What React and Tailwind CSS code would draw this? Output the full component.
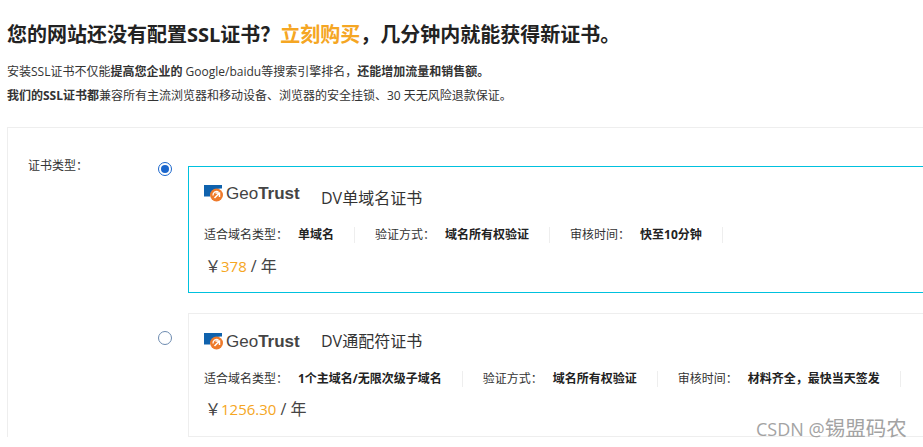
const FONT = 'font-["Open_Sans","Noto_Sans_CJK_SC",sans-serif]';

function GeoTrustLogo() {
  return (
    <div className="flex h-[26px] w-[117px] items-center">
      <svg width="20" height="18" viewBox="0 0 20 18" className="shrink-0">
        <path d="M0 1H18V4.5C12 4 7 7 6 12.5H0Z" fill="#0f62ad" />
        <circle cx="12.5" cy="11" r="6.5" fill="#ee7a2b" />
        <path d="M9 11.5A3.8 3.8 0 0 1 14.5 7.8" fill="none" stroke="#ffffff" strokeWidth="1.3" />
        <path d="M10.5 14L15 9.5M11.5 9H15.5V13" fill="none" stroke="#ffffff" strokeWidth="1.5" />
      </svg>
      <span className='ml-[2px] whitespace-nowrap font-["Liberation_Sans",sans-serif] text-[17px] leading-none text-[#444444]'>
        Geo<span className="font-bold">Trust</span>
      </span>
    </div>
  );
}

function Spec({ label, value, labelW }) {
  return (
    <div className="flex h-4 items-center">
      <span className={`${labelW} shrink-0 text-[12px] text-[#333333]`}>{label}</span>
      <span className="ml-[10px] whitespace-nowrap border-r border-[#eeeeee] pr-5 text-[12px] font-bold leading-4 text-[#222222]">{value}</span>
    </div>
  );
}

function Specs({ items }) {
  return (
    <div className="flex gap-[20px]">
      {items.map((it) => (
        <Spec key={it.label} {...it} />
      ))}
    </div>
  );
}

function Price({ value }) {
  return (
    <div className="flex h-6 items-center pl-px text-[16px] leading-6 text-[#444444]">
      <span>￥</span>
      <span className="text-[15px] text-[#f5a623]">{value}</span>
      <span className="ml-[4px]">/ 年</span>
    </div>
  );
}

function Radio({ checked }) {
  return (
    <div className={`flex h-[14px] w-[14px] items-center justify-center rounded-full border ${checked ? "border-[#1a66cc]" : "border-[#6d8bb0]"}`}>
      {checked && <div className="h-2 w-2 rounded-full bg-[#1a66cc]" />}
    </div>
  );
}

export default function App() {
  return (
    <div className={`relative h-[447px] w-[923px] overflow-hidden bg-white ${FONT} text-[#333333]`}>
      <div className="pl-[7px] pt-[21px]">
        <h1 className="h-7 whitespace-nowrap text-[20px] font-bold leading-7 text-[#222222]">
          您的网站还没有配置SSL证书？<span className="text-[#f5a623]">立刻购买</span>，几分钟内就能获得新证书。
        </h1>
        <p className="mt-[11px] h-6 whitespace-nowrap text-[12px] leading-6">
          安装SSL证书不仅能<b>提高您企业的</b> Google/baidu等搜索引擎排名，<b>还能增加流量和销售额。</b>
        </p>
        <p className="h-6 whitespace-nowrap text-[12px] leading-6">
          <b>我们的SSL证书都</b>兼容所有主流浏览器和移动设备、浏览器的安全挂锁、30 天无风险退款保证。
        </p>
      </div>

      <div className="ml-[7px] mt-[19px] w-[1000px] border-l border-t border-[#eeeeee] pl-[20px] pt-[30px]">
        <div className="flex">
          <div className="w-[130px] shrink-0 text-[12px] leading-4 text-[#333333]">证书类型：</div>
          <div className="flex flex-col gap-5">
            <div className="flex">
              <div className="w-[30px] shrink-0 pt-[4px]">
                <Radio checked />
              </div>
              <div className="mt-[8px] h-[127px] w-[780px] border border-[#00c1de] pl-[15px] pt-[13px]">
                <div className="flex h-[47px] items-start">
                  <GeoTrustLogo />
                  <span className="mt-[6px] text-[16px] leading-6 text-[#333333]">DV单域名证书</span>
                </div>
                <Specs
                  items={[
                    { label: "适合域名类型：", value: "单域名", labelW: "w-[84px]" },
                    { label: "验证方式：", value: "域名所有权验证", labelW: "w-[60px]" },
                    { label: "审核时间：", value: "快至10分钟", labelW: "w-[60px]" },
                  ]}
                />
                <div className="mt-[11px]">
                  <Price value="378" />
                </div>
              </div>
            </div>
            <div className="flex">
              <div className="w-[30px] shrink-0 pt-[18px]">
                <Radio />
              </div>
              <div className="h-[124px] w-[780px] border border-[#eeeeee] pl-[15px] pt-[14px]">
                <div className="flex h-[43px] items-start">
                  <GeoTrustLogo />
                  <span className="mt-px text-[16px] leading-6 text-[#333333]">DV通配符证书</span>
                </div>
                <Specs
                  items={[
                    { label: "适合域名类型：", value: "1个主域名/无限次级子域名", labelW: "w-[84px]" },
                    { label: "验证方式：", value: "域名所有权验证", labelW: "w-[60px]" },
                    { label: "审核时间：", value: "材料齐全，最快当天签发", labelW: "w-[60px]" },
                  ]}
                />
                <div className="mt-[10px]">
                  <Price value="1256.30" />
                </div>
              </div>
            </div>
          </div>
        </div>
      </div>

      <div className="absolute left-[756px] top-[416px] whitespace-nowrap text-[18px] leading-6 text-[#a3a3a3]">
        CSDN @<span className="text-[20.5px]">锡盟码农</span>
      </div>
    </div>
  );
}
